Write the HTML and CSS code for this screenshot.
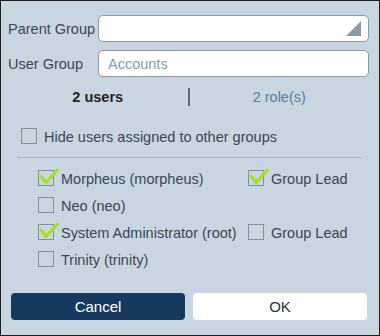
FILE: index.html
```html
<!DOCTYPE html>
<html lang="en">
<head>
    <meta charset="UTF-8">
    <title>User Group</title>
    <link rel="stylesheet" href="styles.css">
</head>
<body>
    <div class="dialog">
        <div class="field-row">
            <label class="field-label">Parent Group</label>
            <div class="select-box"></div>
        </div>
        <div class="field-row">
            <label class="field-label">User Group</label>
            <input type="text" class="text-field" placeholder="Accounts">
        </div>

        <div class="tabs">
            <div class="tab tab-active">2 users</div>
            <div class="tab tab-other">2 role(s)</div>
        </div>

        <div class="hide-row">
            <span class="check"></span>
            <span class="check-label">Hide users assigned to other groups</span>
        </div>

        <div class="divider"></div>

        <div class="user-list">
            <div class="user-row">
                <div class="user-cell">
                    <span class="check checked">
                        <svg viewBox="0 0 24 20"><path d="M4 9l5 6.5L20.5 3"/></svg>
                    </span>
                    <span class="check-label">Morpheus (morpheus)</span>
                </div>
                <div class="user-cell">
                    <span class="check checked">
                        <svg viewBox="0 0 24 20"><path d="M4 9l5 6.5L20.5 3"/></svg>
                    </span>
                    <span class="check-label">Group Lead</span>
                </div>
            </div>
            <div class="user-row">
                <div class="user-cell">
                    <span class="check"></span>
                    <span class="check-label">Neo (neo)</span>
                </div>
            </div>
            <div class="user-row">
                <div class="user-cell">
                    <span class="check checked">
                        <svg viewBox="0 0 24 20"><path d="M4 9l5 6.5L20.5 3"/></svg>
                    </span>
                    <span class="check-label">System Administrator (root)</span>
                </div>
                <div class="user-cell">
                    <span class="check"></span>
                    <span class="check-label">Group Lead</span>
                </div>
            </div>
            <div class="user-row">
                <div class="user-cell">
                    <span class="check"></span>
                    <span class="check-label">Trinity (trinity)</span>
                </div>
            </div>
        </div>

        <div class="buttons">
            <button type="button" class="btn btn-cancel">Cancel</button>
            <button type="button" class="btn btn-ok">OK</button>
        </div>
    </div>
</body>
</html>
```

FILE: styles.css
```css
body {
    margin: 0;
    font-family: 'Liberation Sans', Arial, sans-serif;
    font-size: 14.5px;
    color: #3b4653;
}
.dialog {
    width: 380px;
    height: 336px;
    box-sizing: border-box;
    border: 1px solid #1e1e1e;
    background: #c9d6e1;
    padding: 14px 10px 0 7px;
}
.field-row {
    display: flex;
    align-items: center;
    height: 27px;
    margin-bottom: 8px;
}
.field-label {
    width: 90px;
    flex: none;
}
.select-box,
.text-field {
    flex: 1;
    height: 27px;
    box-sizing: border-box;
    border: 1px solid #8c98a3;
    border-radius: 5px;
    background: #fff;
}
.select-box {
    position: relative;
}
.select-box::after {
    content: '';
    position: absolute;
    right: 7px;
    bottom: 5px;
    width: 15px;
    height: 15px;
    background: #8d99a4;
    clip-path: polygon(100% 0, 100% 100%, 0 100%);
}
.text-field {
    padding: 0 9px;
    font-family: inherit;
    font-size: 14.5px;
    color: #3b4653;
    outline: none;
}
.text-field::placeholder {
    color: #809cb7;
}
.tabs {
    display: flex;
    margin-top: 11px;
    height: 18px;
    line-height: 18px;
    font-size: 14.5px;
}
.tab {
    flex: 1;
    text-align: center;
}
.tab-active {
    font-weight: bold;
    color: #222;
}
.tab-other {
    color: #5f7c98;
    border-left: 2px solid #5b6e80;
}
.hide-row {
    display: flex;
    align-items: center;
    margin: 22px 0 0 13px;
    height: 16px;
}
.check {
    position: relative;
    flex: none;
    width: 16px;
    height: 16px;
    box-sizing: border-box;
    border: 1px solid #8a8f96;
    margin-right: 7px;
}
.check svg {
    position: absolute;
    left: -2px;
    top: -4px;
    width: 24px;
    height: 20px;
    fill: none;
    stroke: #a3e21b;
    stroke-width: 3;
    stroke-linecap: round;
    stroke-linejoin: round;
}
.check-label {
    margin-top: 2px;
}
.divider {
    height: 1px;
    background: #a9b3bc;
    margin: 13px 8px 0 9px;
}
.user-list {
    display: flex;
    flex-direction: column;
    gap: 11px;
    margin: 11px 0 0 30px;
}
.user-row {
    display: grid;
    grid-template-columns: 210px auto;
    height: 16px;
}
.user-cell {
    display: flex;
    align-items: center;
    white-space: nowrap;
}
.buttons {
    display: flex;
    gap: 8px;
    margin: 27px 2px 0 3px;
}
.btn {
    flex: 1;
    height: 27px;
    border: none;
    border-radius: 4px;
    font-family: inherit;
    font-size: 15px;
    cursor: pointer;
}
.btn-cancel {
    background: #163a5e;
    color: #fff;
}
.btn-ok {
    background: #fff;
    color: #2a3440;
}
```
